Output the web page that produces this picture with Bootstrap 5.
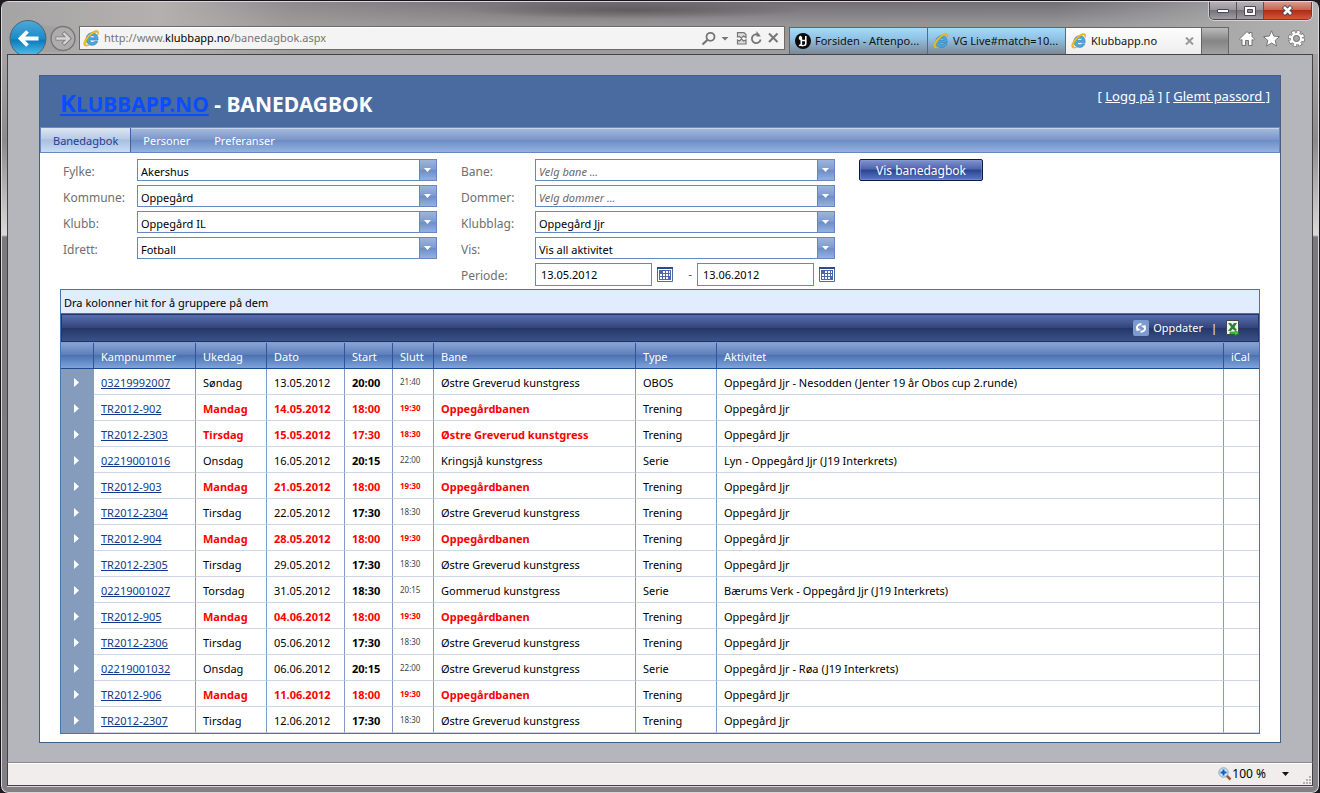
<!DOCTYPE html>
<html lang="no">
<head>
<meta charset="utf-8">
<meta name="viewport" content="width=device-width, initial-scale=1">
<title>Klubbapp.no - Banedagbok</title>
<link href="https://cdn.jsdelivr.net/npm/bootstrap@5.3.0/dist/css/bootstrap.min.css" rel="stylesheet">
<style>
  body { font-family: "Noto Sans", "Open Sans", sans-serif; font-size: 12px; line-height: 16px; color: #000; background: #1c1a20; }

  /* browser window */
  .win { border: 1px solid #16131a; border-radius: 8px; padding: 0 6px 7px; overflow: hidden;
    box-shadow: inset 0 0 0 1px #d9d7d8;
    background: linear-gradient(#9b999a 0, #a3a1a2 60px, #8c8a8b 140px, #dcdad9 234px, #7b797b 236px, #828083 100%); }
  .chrome { height: 52px; padding: 24px 13px 0 77px; margin: 1px -5px 0; overflow: hidden;
    background:
      radial-gradient(170px 9px at 48% 8px, rgba(70,66,68,.55), rgba(70,66,68,0)),
      linear-gradient(90deg, #a5a4a4 0, #b5b0b0 12%, rgba(160,155,155,.7) 22%, rgba(140,132,134,.3) 42%, rgba(140,140,144,.3) 80%, #b2b2b2 100%),
      linear-gradient(#66616a 0, #999 22px, #a6a6a6 100%); }
  .capbtns { top: 0; right: 6px; height: 18px; border: 1px solid #4c4850; border-top: 0; border-radius: 0 0 5px 5px; overflow: hidden; box-shadow: 0 0 0 1px rgba(255,255,255,.5); }
  .capbtn { width: 27px; border: 0; border-right: 1px solid #55505a; padding: 0; line-height: 0; background: linear-gradient(#b5b1b6 0, #98949b 48%, #77737a 50%, #a09ca3 100%); }
  .capbtn-close { width: 47px; border-right: 0; background: linear-gradient(#dc9a8c 0, #c9604c 48%, #b02d15 50%, #d8533a 100%); }
  .navbtns { left: 7px; top: 18px; }
  .plainbtn { border: 0; padding: 0; background: none; line-height: 0; }
  .addr { flex: 0 1 706px; min-width: 0; height: 24px; border: 1px solid #6b6b6b; background: #f4f4f4; padding: 0 5px 0 3px; box-shadow: inset 0 1px #fff; }
  .addr-text { font-size: 11px; line-height: 20px; color: #757575; }
  .addr-text b { color: #000; font-weight: 400; }
  .tabrow { min-width: 0; }
  .btab { height: 27px; border: 1px solid #666; border-bottom: 0; margin-right: -1px; padding: 0 3px 0 5px; gap: 4px; color: #111; text-decoration: none; white-space: nowrap; flex: 0 1 139px; min-width: 0;
    background: linear-gradient(#a5dbfd 0, #90c3e4 40%, #7b8794 100%); font-size: 11px; }
  .btab-on { background: linear-gradient(#fdfdfd, #ededed); flex-basis: 137px; }
  .btab-new { flex: 0 0 28px; background: linear-gradient(#bbb, #858585 50%, #a2a2a2); }
  .tools { padding-bottom: 6px; }

  .view { background: #b5b6bb; border: 1px solid #454247; border-bottom: 0; padding: 20px 31px 19px; box-shadow: 0 -1px #e6e6e6; }
  .status { height: 24px; border: 1px solid #454247; border-top-color: #8b8a8d; background: #f0edec; box-shadow: inset 0 1px #fff, 0 1px #d6d4d5; }
  .zoomdrop { margin: 0 14px 0 16px; }

  /* page */
  .sheet { background: #fff; border: 1px solid #466083; }
  .masthead { background: #4a6b9f; height: 51px; padding: 11px 10px 0 20px; color: #fff; }
  .masthead h1 { font-size: 21px; line-height: 32px; font-weight: 700; text-transform: uppercase; margin: 0; }
  .masthead h1::first-letter { font-size: 24px; }
  .masthead h1 a { color: #0a4cff; }
  .loginbox { font-size: 13px; line-height: 18px; }
  .loginbox a { color: #fff; }
  .menu { height: 26px; border: 1px solid #6787c0; border-top-color: #6a8cc4; box-shadow: inset 0 1px #c5d4ea; background: linear-gradient(#a6bbde 0, #7b96c9 48%, #6a8cc5 50%, #95b3e0 100%); }
  .menu a { color: #fff; font-size: 11px; line-height: 26px; padding: 0 12px; text-decoration: none; }
  .menu a.active { color: #25408f; border-right: 1px solid #4161a0; background: linear-gradient(#dde6f2 0, #b9cbe6 45%, #a7bee2 50%, #c9dcf5 100%); }

  .filters { padding: 6px 20px 4px 23px; column-gap: 24px; }
  .fcol { flex: 0 1 374px; display: grid; grid-template-columns: 74px minmax(0, 1fr); grid-auto-rows: 22px; row-gap: 4px; }
  .fcol label { font-size: 12px; line-height: 25px; color: #6f6f6f; }
  .pick { width: 100%; height: 22px; border: 1px solid #6787c0; border-radius: 0; padding: 3px 20px 0 3px; font-size: 11px; line-height: 18px; color: #000; appearance: none;
    background:
      url("data:image/svg+xml,%3Csvg xmlns='http://www.w3.org/2000/svg' width='7' height='4'%3E%3Cpath d='M0 0h7L3.500 4z' fill='white'/%3E%3C/svg%3E") right 5px top 8px / 7px 4px no-repeat,
      linear-gradient(#6787c0, #6787c0) right 16px top 0 / 1px 100% no-repeat,
      linear-gradient(#9db5da 0, #7f9bcd 48%, #6b8cc5 50%, #94b2e0 100%) right / 16px 100% no-repeat, #fff; }
  .pick.hint { color: #6a6a6a; font-style: italic; }
  .dates { gap: 5px; height: 23px; }
  .dates input { flex: 1 1 117px; min-width: 0; width: 117px; height: 23px; border: 1px solid #6787c0; padding: 0 5px; font-size: 11px; }
  .dates .dash { width: 14px; text-align: right; color: #666; }
  .showbtn { width: 124px; height: 22px; border: 1px solid #0f1745; border-radius: 2px; padding: 0; font-size: 12px; line-height: 21px; color: #fff; box-shadow: inset 0 0 0 1px rgba(140,160,225,.45);
    background: linear-gradient(#8093cf 0, #4f63ad 46%, #2a4390 50%, #5b7ac6 100%); }

  .gridbox { margin: 0 20px 8px; border: 1px solid #4a73b2; font-size: 11px; }
  .groupbar { height: 24px; line-height: 25px; padding: 0 3px; background: #e1edff; border-bottom: 1px solid #4a73b2; }
  .cmdbar { height: 28px; padding: 0 14px; color: #fff; border: 1px solid #22346e; background: linear-gradient(#596ea8 0, #33457e 48%, #253768 52%, #3b5288 100%); }
  .cmdbar button { color: #fff; font-size: 11px; }
  .bane { margin: 0; table-layout: fixed; color: #000; --bs-table-bg: transparent; --bs-table-color: inherit; border-collapse: separate; border-spacing: 0; border-top: 1px solid #7d9cd0; }
  .bane > :not(caption) > * > * { padding: 2px 7px 0; height: 26px; line-height: 23px; vertical-align: middle; white-space: nowrap; box-shadow: none; border: 0; border-right: 1px solid #7f9cc6; border-bottom: 1px solid #ccd7e6; }
  .bane > :not(caption) > * > :last-child { border-right: 0; }
  .bane > thead > tr > th { color: #fff; font-weight: 400; border-right-color: #31549a; border-bottom-color: #1e4a8f; background: linear-gradient(#88a4d4 0, #5f7fbb 46%, #4a73b4 50%, #80a3da 100%); }
  .bane > tbody > tr > td:first-child { background: #869cbc; border-color: #869cbc; padding: 2px 0 0 13px; }
  .bane td a { color: #12398a; }
  .bane > tbody > tr > td:nth-child(5) { font-weight: 700; }
  .bane > tbody > tr > td:nth-child(6) { font-size: 8px; padding-top: 0; color: #444; }
  .bane > tbody > tr.hot > td:nth-child(n+3):nth-child(-n+7) { font-weight: 700; color: #f00; }
  .xp { width: 5px; height: 9px; display: block; }
</style>
</head>
<body>
<svg width="0" height="0" class="position-absolute" aria-hidden="true">
  <symbol id="ie" viewBox="0 0 16 16">
    <path d="M14.200 9.500H6.200c.2 1.400 1.200 2.300 2.700 2.300 1 0 1.700-.4 2.100-1.100h2.900c-.8 2.300-2.700 3.700-5.200 3.700-3.500 0-5.800-2.400-5.800-5.900 0-3.400 2.400-5.800 5.800-5.800 3.600 0 5.700 2.700 5.500 6.800zM11.300 7.300c-.2-1.300-1.200-2-2.500-2s-2.300.7-2.600 2z" fill="#4aa9e2" stroke="#1d74b4" stroke-width=".5"/>
    <path d="M14 4.600c.9-2 .8-3.500-.4-3.900C11.400 0 7 2.600 3.900 6.300 1.200 9.600 0 13 1.300 14.500c.9 1 2.700.6 4.600-.5-1.500.5-2.600.5-3.100-.2-.9-1.300.4-4.300 2.900-7.100C8.300 3.700 11.600 1.600 13.100 2.100c.8.3 1 1.200.9 2.500z" fill="#f6c418" stroke="#dca614" stroke-width=".6"/>
  </symbol>
  <symbol id="cal" viewBox="0 0 16 15">
    <path d="M.5.5h15v14H.5z" fill="#fff" stroke="#4d6aa3"/><path d="M0 0h16v2H0z" fill="#2c4c8c"/><path d="M2 3h12v10H2z" fill="#4a69a6"/>
    <path d="M6 4h2v2H6zM9 4h2v2H9zM12 4h1v2h-1zM3 7h2v2H3zM6 7h2v2H6zM9 7h2v2H9zM12 7h1v2h-1zM3 10h2v2H3zM6 10h2v2H6zM9 10h2v2H9z" fill="#fff"/>
  </symbol>
  <symbol id="tri" viewBox="0 0 5 9"><path d="M0 0l5 4.500L0 9z" fill="#fff"/></symbol>
</svg>

<div class="win min-vh-100 d-flex flex-column">
  <header class="chrome position-relative d-flex align-items-end">
    <div class="navbtns position-absolute">
      <svg width="70" height="40" viewBox="0 0 70 40" role="img" aria-label="Tilbake og frem">
        <defs><linearGradient id="bk" x2="0" y2="1"><stop offset="0" stop-color="#4fa9d8"/><stop offset=".5" stop-color="#1c8bc8"/><stop offset=".55" stop-color="#0a7cbc"/><stop offset="1" stop-color="#5cc4ec"/></linearGradient></defs>
        <path d="M28 2q10 6 24 4v26H28z" fill="#a2a0a0"/>
        <circle cx="19" cy="18.500" r="18" fill="url(#bk)" stroke="#56646e"/>
        <path d="M29.500 18.500H12M18.500 11.500l-7 7 7 7" fill="none" stroke="#fff" stroke-width="3.800"/>
        <circle cx="54" cy="18.500" r="12" fill="#aeacac" stroke="#777" stroke-width="1.400"/>
        <path d="M46.500 18.500h13M54 12.500l6 6-6 6" fill="none" stroke="#7d7d7d" stroke-width="4.200"/>
        <path d="M47.200 18.500h12M54.500 13l5.500 5.500-5.500 5.500" fill="none" stroke="#d6d6d6" stroke-width="2.400"/>
      </svg>
    </div>
    <div class="addr d-flex align-items-center align-self-start me-1">
      <svg width="17" height="17" class="me-1"><use href="#ie"/></svg>
      <span class="addr-text flex-grow-1">http://www.<b>klubbapp.no</b>/banedagbok.aspx</span>
      <svg width="78" height="15" viewBox="0 0 78 15" fill="none" stroke="#767676" stroke-width="1.800" role="img" aria-label="Søk, kompatibilitet, oppdater, stopp">
        <circle cx="9.500" cy="5.800" r="4"/><path d="M6.600 8.700L1.500 13.500" stroke-width="2.200"/>
        <path d="M20.500 6h7l-3.500 3.500z" fill="#767676" stroke="none"/>
        <path d="M36.500 6V1.600h6.500l2 2v3l-2.500-1.600-2.200 2-2-1.500zM36.500 9l2 1 2-2 2 2 2.500-1v4h-8.500z" stroke-width="1.200" fill="#ddd"/>
        <path d="M58 4.200a4.400 4.400 0 1 0 1.600 4.300"/><path d="M55.500 0v5.500h4.300z" fill="#767676" stroke="none"/>
        <path d="M68 2.500l8.500 8.500M76.500 2.500L68 11" stroke-width="2"/>
      </svg>
    </div>
    <nav class="tabrow d-flex flex-grow-1 align-items-end" aria-label="Faner">
      <a class="btab d-flex align-items-center" href="#">
        <svg width="16" height="16" viewBox="0 0 16 16" class="flex-shrink-0"><circle cx="8" cy="8" r="8" fill="#0a0a0a"/><path d="M6 3.200c-2 .8-2 2.800-.2 3.300M6.300 3.500v8.500M10.800 3v7.500c0 2-1.500 2-2 1.300M6.500 7.500h4.300M4 12.500c1.500-.6 2.500 0 4.500.3" fill="none" stroke="#fff" stroke-width="1.600"/></svg>
        <span>Forsiden - Aftenpo...</span></a>
      <a class="btab d-flex align-items-center" href="#"><svg width="16" height="16" class="flex-shrink-0"><use href="#ie"/></svg><span>VG Live#match=10...</span></a>
      <a class="btab btab-on d-flex align-items-center" href="#"><svg width="16" height="16" class="flex-shrink-0"><use href="#ie"/></svg><span class="flex-grow-1">Klubbapp.no</span>
        <svg width="9" height="8" viewBox="0 0 9 8" class="me-1"><path d="M1 .5l7 7M8 .5l-7 7" stroke="#999" stroke-width="2"/></svg></a>
      <button type="button" class="btab btab-new" aria-label="Ny fane"></button>
    </nav>
    <div class="tools d-flex">
      <svg width="66" height="18" viewBox="0 0 66 18" fill="#fff" stroke="#757575" stroke-width="1" role="img" aria-label="Hjem, favoritter, verktøy">
        <path d="M8 1.500l2.500 2.500V2.500H13v4l2.500 2.500-1.200 1.500-1.300-1V15.500H9.500v-5h-3v5H3v-6l-1.300 1L.5 9z"/>
        <path d="M32.500 .8l2.300 5.300 5.700.5-4.300 3.800 1.300 5.600-5-3-5 3 1.300-5.600-4.300-3.800 5.700-.5z"/>
        <circle cx="57.500" cy="8.500" r="6" stroke="#757575" stroke-width="5" stroke-dasharray="3.500 1.210" stroke-dashoffset=".570" fill="none"/>
        <circle cx="57.500" cy="8.500" r="6" stroke="#fff" stroke-width="3.400" stroke-dasharray="2.360 2.350" fill="none"/>
        <circle cx="57.500" cy="8.500" r="4.400" stroke="#fff" stroke-width="2.400" fill="none"/><circle cx="57.500" cy="8.500" r="3" fill="#a5a5a5"/>
      </svg>
    </div>
    <div class="capbtns position-absolute d-flex">
      <button type="button" class="capbtn" aria-label="Minimer"><svg width="14" height="6"><path d="M1.500 1.500h11v3h-11z" fill="#fff" stroke="#4a4658"/></svg></button>
      <button type="button" class="capbtn" aria-label="Maksimer"><svg width="12" height="10"><path d="M.5.500h11v9H.5z" fill="#fff" stroke="#4a4658"/><path d="M3.500 3.500h5v3h-5z" fill="#8c8890" stroke="#4a4658"/></svg></button>
      <button type="button" class="capbtn capbtn-close" aria-label="Lukk"><svg width="13" height="11" viewBox="0 0 13 11"><path d="M2.500 1.500l8 8M10.500 1.500l-8 8" stroke="#4a4658" stroke-width="4.500"/><path d="M3 2l7 7M10 2l-7 7" stroke="#fff" stroke-width="2.600"/></svg></button>
    </div>
  </header>

  <main class="view flex-grow-1">
    <div class="sheet">
      <div class="masthead d-flex justify-content-between align-items-start">
        <h1><a href="#">Klubbapp.no</a> - banedagbok</h1>
        <div class="loginbox">[ <a href="#">Logg på</a> ] [ <a href="#">Glemt passord ]</a></div>
      </div>
      <nav class="menu d-flex" aria-label="Hovedmeny">
        <a class="active" href="#">Banedagbok</a><a href="#">Personer</a><a href="#">Preferanser</a>
      </nav>

      <form class="filters d-flex align-items-start">
        <div class="fcol">
          <label for="fylke">Fylke:</label><select class="pick" id="fylke"><option>Akershus</option></select>
          <label for="kommune">Kommune:</label><select class="pick" id="kommune"><option>Oppegård</option></select>
          <label for="klubb">Klubb:</label><select class="pick" id="klubb"><option>Oppegård IL</option></select>
          <label for="idrett">Idrett:</label><select class="pick" id="idrett"><option>Fotball</option></select>
        </div>
        <div class="fcol">
          <label for="bane">Bane:</label><select class="pick hint" id="bane"><option>Velg bane ...</option></select>
          <label for="dommer">Dommer:</label><select class="pick hint" id="dommer"><option>Velg dommer ...</option></select>
          <label for="lag">Klubblag:</label><select class="pick" id="lag"><option>Oppegård Jjr</option></select>
          <label for="vis">Vis:</label><select class="pick" id="vis"><option>Vis all aktivitet</option></select>
          <label for="fra">Periode:</label>
          <div class="dates d-flex align-items-center">
            <input type="text" id="fra" value="13.05.2012">
            <button type="button" class="plainbtn" aria-label="Velg fra-dato"><svg width="16" height="15"><use href="#cal"/></svg></button>
            <span class="dash">-</span>
            <input type="text" aria-label="Til dato" value="13.06.2012">
            <button type="button" class="plainbtn" aria-label="Velg til-dato"><svg width="16" height="15"><use href="#cal"/></svg></button>
          </div>
        </div>
        <button type="button" class="showbtn">Vis banedagbok</button>
      </form>

      <section class="gridbox">
        <div class="groupbar">Dra kolonner hit for å gruppere på dem</div>
        <div class="cmdbar d-flex justify-content-end align-items-center">
          <button type="button" class="plainbtn d-flex align-items-center gap-1">
            <svg width="16" height="16" viewBox="0 0 16 16"><rect width="16" height="16" rx="2" fill="#7b9bd0"/><path d="M4 8.500c-.5-3 2-4.500 4.500-4.200M12 7.500c.5 3-2 4.500-4.500 4.200" fill="none" stroke="#fff" stroke-width="2"/><path d="M3 6.500l5 3.500-4.500 1zM13 9.500L8 6l4.500-1z" fill="#fff"/></svg>
            Oppdater</button>
          <span class="px-2">|</span>
          <button type="button" class="plainbtn me-1" aria-label="Eksporter til Excel">
            <svg width="15" height="16" viewBox="0 0 15 16"><path d="M1.500.5h12v14h-12z" fill="#eef6ea" stroke="#445"/><path d="M3 3h3l1.500 2L9 3h3L9.500 7l2.500 3H9L7.500 9 6 11H3l3-4z" fill="#2f7f3e"/><path d="M5 12h5v-2l4 3-4 3v-2H5z" fill="#3fcf3a" stroke="#137a1c" stroke-width=".6"/></svg></button>
        </div>
        <table class="table bane">
          <colgroup><col style="width:33px"><col style="width:102px"><col style="width:71px"><col style="width:78px"><col style="width:48px"><col style="width:41px"><col style="width:202px"><col style="width:81px"><col><col style="width:35px"></colgroup>
          <thead><tr><th></th><th>Kampnummer</th><th>Ukedag</th><th>Dato</th><th>Start</th><th>Slutt</th><th>Bane</th><th>Type</th><th>Aktivitet</th><th>iCal</th></tr></thead>
          <tbody id="rows"></tbody>
        </table>
      </section>
    </div>
  </main>

  <footer class="status d-flex align-items-center justify-content-end">
    <svg width="14" height="14" viewBox="0 0 14 14"><path d="M8.500 8.500l4 4" stroke="#9a5a3a" stroke-width="2.500"/><circle cx="5.500" cy="5.500" r="4.700" fill="#cfe6fa" stroke="#8aa0b8"/><path d="M5.500 2.500v6M2.500 5.500h6" stroke="#0c5fc0" stroke-width="2"/></svg>
    <span>100 %</span>
    <svg width="7" height="4" class="zoomdrop"><path d="M0 0h7L3.500 4z" fill="#111"/></svg>
    <svg width="9" height="9" class="align-self-end" fill="#b4b1b0"><path d="M6 0h2v2H6zM3 3h2v2H3zM6 3h2v2H6zM0 6h2v2H0zM3 6h2v2H3zM6 6h2v2H6z"/></svg>
  </footer>
</div>

<script>
  // match id, weekday, date, start, end, pitch, type, activity, highlighted
  const team = "Oppegård Jjr", home = "Oppegårdbanen", turf = "Østre Greverud kunstgress";
  const events = [
    ["03219992007", "Søndag", "13.05.2012", "20:00", "21:40", turf, "OBOS", team + " - Nesodden (Jenter 19 år Obos cup 2.runde)"],
    ["TR2012-902", "Mandag", "14.05.2012", "18:00", "19:30", home, "Trening", team, true],
    ["TR2012-2303", "Tirsdag", "15.05.2012", "17:30", "18:30", turf, "Trening", team, true],
    ["02219001016", "Onsdag", "16.05.2012", "20:15", "22:00", "Kringsjå kunstgress", "Serie", "Lyn - Oppegård Jjr (J19 Interkrets)"],
    ["TR2012-903", "Mandag", "21.05.2012", "18:00", "19:30", home, "Trening", team, true],
    ["TR2012-2304", "Tirsdag", "22.05.2012", "17:30", "18:30", turf, "Trening", team],
    ["TR2012-904", "Mandag", "28.05.2012", "18:00", "19:30", home, "Trening", team, true],
    ["TR2012-2305", "Tirsdag", "29.05.2012", "17:30", "18:30", turf, "Trening", team],
    ["02219001027", "Torsdag", "31.05.2012", "18:30", "20:15", "Gommerud kunstgress", "Serie", "Bærums Verk - Oppegård Jjr (J19 Interkrets)"],
    ["TR2012-905", "Mandag", "04.06.2012", "18:00", "19:30", home, "Trening", team, true],
    ["TR2012-2306", "Tirsdag", "05.06.2012", "17:30", "18:30", turf, "Trening", team],
    ["02219001032", "Onsdag", "06.06.2012", "20:15", "22:00", turf, "Serie", "Oppegård Jjr - Røa (J19 Interkrets)"],
    ["TR2012-906", "Mandag", "11.06.2012", "18:00", "19:30", home, "Trening", team, true],
    ["TR2012-2307", "Tirsdag", "12.06.2012", "17:30", "18:30", turf, "Trening", team]
  ];
  document.getElementById("rows").innerHTML = events.map(([id, day, date, from, to, pitch, type, act, hot]) =>
    `<tr class="${hot ? "hot" : ""}"><td><svg class="xp"><use href="#tri"/></svg></td><td><a href="#">${id}</a></td>` +
    [day, date, from, to, pitch, type, act, ""].map(v => `<td>${v}</td>`).join("") + "</tr>").join("");
</script>
<script src="https://cdn.jsdelivr.net/npm/bootstrap@5.3.0/dist/js/bootstrap.bundle.min.js"></script>
</body>
</html>
